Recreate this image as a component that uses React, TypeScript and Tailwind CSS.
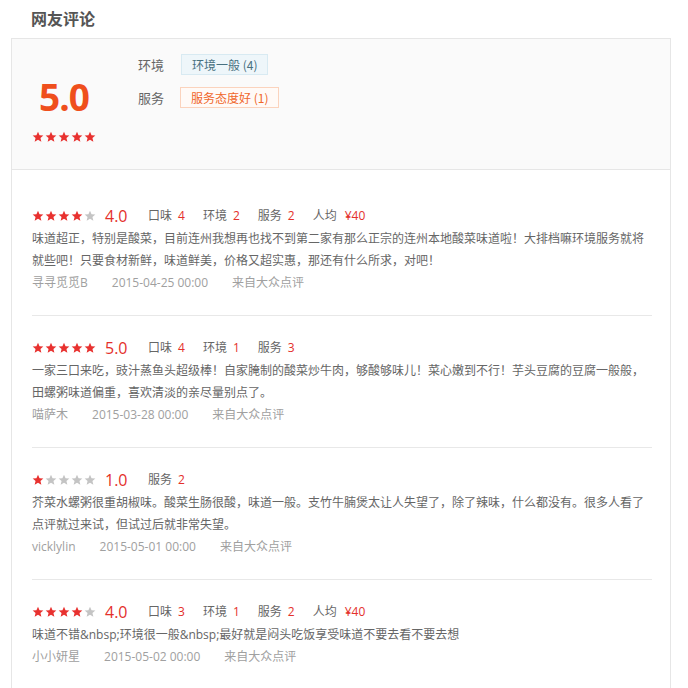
import React from 'react'

type Score = { label: string; value: string }

type Review = {
  stars: number
  scores: Score[]
  price?: string
  text: string
  user: string
  date: string
}

const reviews: Review[] = [
  {
    stars: 4,
    scores: [
      { label: '口味', value: '4' },
      { label: '环境', value: '2' },
      { label: '服务', value: '2' },
    ],
    price: '¥40',
    text: '味道超正，特别是酸菜，目前连州我想再也找不到第二家有那么正宗的连州本地酸菜味道啦！大排档嘛环境服务就将就些吧！只要食材新鲜，味道鲜美，价格又超实惠，那还有什么所求，对吧！',
    user: '寻寻觅觅B',
    date: '2015-04-25 00:00',
  },
  {
    stars: 5,
    scores: [
      { label: '口味', value: '4' },
      { label: '环境', value: '1' },
      { label: '服务', value: '3' },
    ],
    text: '一家三口来吃，豉汁蒸鱼头超级棒！自家腌制的酸菜炒牛肉，够酸够味儿！菜心嫩到不行！芋头豆腐的豆腐一般般，田螺粥味道偏重，喜欢清淡的亲尽量别点了。',
    user: '喵萨木',
    date: '2015-03-28 00:00',
  },
  {
    stars: 1,
    scores: [{ label: '服务', value: '2' }],
    text: '芥菜水螺粥很重胡椒味。酸菜生肠很酸，味道一般。支竹牛腩煲太让人失望了，除了辣味，什么都没有。很多人看了点评就过来试，但试过后就非常失望。',
    user: 'vicklylin',
    date: '2015-05-01 00:00',
  },
  {
    stars: 4,
    scores: [
      { label: '口味', value: '3' },
      { label: '环境', value: '1' },
      { label: '服务', value: '2' },
    ],
    price: '¥40',
    text: '味道不错&nbsp;环境很一般&nbsp;最好就是闷头吃饭享受味道不要去看不要去想',
    user: '小小妍星',
    date: '2015-05-02 00:00',
  },
]

const Star = ({ on }: { on: boolean }) => (
  <svg viewBox="0 0 24 24" className="h-[12px] w-[12px]">
    <path
      d="M12 1.5l3.1 7.1 7.6.6-5.8 5 1.8 7.5L12 17.6l-6.7 4.1 1.8-7.5-5.8-5 7.6-.6z"
      fill={on ? '#e8312f' : '#c4c4c4'}
    />
  </svg>
)

const Stars = ({ count }: { count: number }) => (
  <div className="flex gap-[1px]">
    {[1, 2, 3, 4, 5].map((i) => (
      <Star key={i} on={i <= count} />
    ))}
  </div>
)

const ReviewItem = ({ review, first }: { review: Review; first: boolean }) => (
  <div className={`border-b border-[#e8e8e8] pb-[21px] ${first ? 'pt-[34px]' : 'pt-[20px]'}`}>
    <div className="flex h-[24px] items-center">
      <Stars count={review.stars} />
      <span className="ml-[9px] w-[24px] text-[16px] text-[#e4302b]">{review.stars}.0</span>
      <div className="ml-[19px] flex items-center gap-[18px] text-[12px]">
        {review.scores.map((s) => (
          <span key={s.label} className="flex gap-[6px]">
            <span className="text-[#666]">{s.label}</span>
            <span className="text-[#e4302b]">{s.value}</span>
          </span>
        ))}
        {review.price && (
          <span className="flex gap-[8px]">
            <span className="text-[#666]">人均</span>
            <span className="text-[#e4302b]">{review.price}</span>
          </span>
        )}
      </div>
    </div>
    <p className="text-[12px] leading-[22px] text-[#666]">{review.text}</p>
    <div className="flex text-[12px] leading-[22px] text-[#a0a0a0]">
      <span className="mr-[24px]">{review.user}</span>
      <span className="mr-[24px]">{review.date}</span>
      <span>来自大众点评</span>
    </div>
  </div>
)

export default function App() {
  return (
    <div
      className="min-h-[688px] w-[688px] bg-white"
      style={{ fontFamily: '"Open Sans", "Noto Sans CJK SC", sans-serif' }}
    >
      <h2
        className="h-[38px] pl-[31px] pt-[6px] text-[16px] font-bold leading-[24px] text-[#555]"
        style={{ fontFamily: '"Noto Sans CJK SC", sans-serif' }}
      >
        网友评论
      </h2>
      <div className="ml-[11px] w-[660px] border border-[#e6e6e6]">
        <div className="flex h-[131px] border-b border-[#e6e6e6] bg-[#fafafa]">
          <div className="flex w-[104px] flex-col items-center pt-[35px]">
            <span className="text-[37px] font-bold leading-[46px] tracking-[-1px] text-[#ef4f1c]">
              5.0
            </span>
            <div className="mt-[11px]">
              <Stars count={5} />
            </div>
          </div>
          <div
            className="ml-[22px] flex flex-col gap-[12px] pt-[15px] text-[13px] text-[#666]"
            style={{ fontFamily: '"Noto Sans CJK SC", sans-serif' }}
          >
            <div className="flex items-center">
              <span className="w-[43px]">环境</span>
              <span className="border border-[#d8eaf2] bg-[#eef6fa] px-[10px] text-[12px] leading-[19px] text-[#48707f]">
                环境一般 (4)
              </span>
            </div>
            <div className="flex items-center">
              <span className="w-[42px]">服务</span>
              <span className="border border-[#fbd3bd] bg-[#fffaf7] px-[10px] text-[12px] leading-[19px] text-[#f0662a]">
                服务态度好 (1)
              </span>
            </div>
          </div>
        </div>
        <div className="pl-[20px] pr-[18px]">
          {reviews.map((r, i) => (
            <ReviewItem key={i} review={r} first={i === 0} />
          ))}
        </div>
      </div>
    </div>
  )
}
